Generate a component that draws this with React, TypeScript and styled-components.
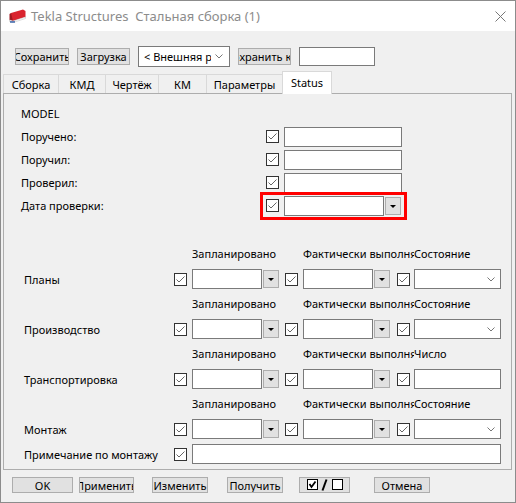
import React from 'react'
import styled, { createGlobalStyle } from 'styled-components'

const GlobalStyle = createGlobalStyle`
  * { box-sizing: border-box; }
  html, body { margin: 0; padding: 0; background: #fff; }
  body {
    font-family: "Noto Sans", "Liberation Sans", sans-serif;
    font-size: 11px;
    color: #000;
  }
`

const Window = styled.div`
  width: 516px;
  height: 503px;
  border: 1px solid #8c8c8c;
  background: #f0f0f0;
  display: flex;
  flex-direction: column;
  overflow: hidden;
`

const TitleBar = styled.div`
  height: 30px;
  flex: none;
  background: #fff;
  display: flex;
  align-items: center;
  gap: 5px;
  padding: 0 9px 0 8px;
  color: #8c8c8c;
  font-size: 13px;
`

const TitleText = styled.span`
  flex: 1;
  white-space: pre;
`

const Body = styled.div`
  flex: 1;
  display: flex;
  flex-direction: column;
  padding: 15px 3px 0 2px;
`

const Toolbar = styled.div`
  height: 21px;
  display: flex;
  align-items: center;
  gap: 8px;
  padding-left: 12px;
`

const Button = styled.div<{ $w: number; $h?: number; $ml?: number }>`
  width: ${p => p.$w}px;
  height: ${p => p.$h ?? 17}px;
  margin-left: ${p => p.$ml ?? 0}px;
  flex: none;
  background: #e1e1e1;
  border: 1px solid #adadad;
  display: flex;
  align-items: center;
  justify-content: center;
  overflow: hidden;
  white-space: nowrap;
  line-height: 1;
`

const SelectBox = styled.div`
  width: 92px;
  height: 21px;
  background: #fff;
  border: 1px solid #7a7a7a;
  display: flex;
  align-items: center;
  padding: 0 6px 0 5px;
  gap: 4px;
  & span {
    flex: 1;
    overflow: hidden;
    white-space: nowrap;
  }
`

const TextBox = styled.div<{ $w?: number; $h?: number }>`
  width: ${p => (p.$w ? `${p.$w}px` : '100%')};
  height: ${p => p.$h ?? 20}px;
  flex: none;
  background: #fff;
  border: 1px solid #7a7a7a;
`

const TabStrip = styled.div`
  height: 22px;
  margin-top: 4px;
  display: flex;
  align-items: flex-end;
`

const Tab = styled.div<{ $w: number; $active?: boolean }>`
  width: ${p => p.$w}px;
  height: ${p => (p.$active ? 23 : 19)}px;
  margin-bottom: ${p => (p.$active ? -1 : 0)}px;
  margin-left: -1px;
  position: relative;
  z-index: ${p => (p.$active ? 1 : 0)};
  background: ${p => (p.$active ? '#fff' : '#f0f0f0')};
  border: 1px solid #d9d9d9;
  border-bottom: none;
  display: flex;
  align-items: center;
  justify-content: center;
  padding-bottom: ${p => (p.$active ? 2 : 0)}px;
  white-space: nowrap;
  &:first-child { margin-left: 0; }
`

const Panel = styled.div`
  height: 377px;
  border: 1px solid #adadad;
  padding: 7px 0 0 17px;
  display: flex;
  flex-direction: column;
`

const UpperRow = styled.div<{ $h?: number }>`
  height: ${p => p.$h ?? 23}px;
  display: grid;
  grid-template-columns: 245px 18px auto;
  align-items: center;
`

const Label = styled.span`
  white-space: nowrap;
`

const Box = styled.span`
  width: 13px;
  height: 13px;
  background: #fff;
  border: 1px solid #333;
  display: flex;
  align-items: center;
  justify-content: center;
`

const Highlight = styled.div`
  grid-column: 2 / span 2;
  justify-self: start;
  display: flex;
  align-items: center;
  gap: 5px;
  position: relative;
  &::after {
    content: '';
    position: absolute;
    top: -4px;
    bottom: -4px;
    left: -6px;
    right: -6px;
    border: 3px solid #ff0000;
  }
`

const Picker = styled.div`
  display: flex;
  align-items: center;
  gap: 1px;
`

const DropButton = styled.div`
  width: 16px;
  height: 18px;
  background: #e1e1e1;
  border: 1px solid #adadad;
  display: flex;
  align-items: center;
  justify-content: center;
  &::before {
    content: '';
    border-left: 3px solid transparent;
    border-right: 3px solid transparent;
    border-top: 3px solid #000;
    margin-top: 1px;
  }
`

const Combo = styled.div`
  width: 87px;
  height: 20px;
  background: #fff;
  border: 1px solid #7a7a7a;
  display: flex;
  align-items: center;
  justify-content: flex-end;
  padding-right: 5px;
`

const Lower = styled.div`
  margin-top: 28px;
  padding-left: 3px;
  display: flex;
  flex-direction: column;
`

const Group = styled.div`
  display: flex;
  flex-direction: column;
  & + & { margin-top: 6px; }
`

const HeaderRow = styled.div`
  height: 16px;
  margin-bottom: 8px;
  padding-left: 168px;
  display: grid;
  grid-template-columns: 111px 111px 87px;
  align-items: center;
  & span {
    overflow: hidden;
    white-space: nowrap;
  }
`

const ControlRow = styled.div<{ $mt?: number }>`
  height: 20px;
  margin-top: ${p => p.$mt ?? 0}px;
  display: grid;
  grid-template-columns: 150px 18px 93px 18px 94px 17px 87px;
  align-items: center;
`

const Wide = styled.div`
  grid-column: 3 / span 5;
`

const Footer = styled.div`
  margin-top: 7px;
  padding-left: 9px;
  display: flex;
  align-items: center;
`

const Check = () => (
  <Box>
    <svg width="11" height="11" viewBox="0 0 11 11">
      <polyline points="1.5,5.5 4,8 9.5,2.5" fill="none" stroke="#666" strokeWidth="1" />
    </svg>
  </Box>
)

const Chevron = () => (
  <svg width="8" height="5" viewBox="0 0 8 5">
    <polyline points="0.5,0.5 4,4 7.5,0.5" fill="none" stroke="#777" strokeWidth="1" />
  </svg>
)

const DatePicker = ({ w }: { w: number }) => (
  <Picker>
    <TextBox $w={w} />
    <DropButton />
  </Picker>
)

const Logo = () => (
  <svg width="17" height="14" viewBox="0 0 17 14">
    <path d="M2 4 L14 0.5 L16.5 2 L16.5 8 L4 12 L2 11 Z" fill="#d9232e" />
    <path d="M0.5 5 L2 4 L4 12 L0.5 11 Z" fill="#a01820" />
    <path d="M0.5 11 L4 12 L16.5 8 L16.5 9.5 L4 13.5 L0.5 12.5 Z" fill="#fff" stroke="#bbb" strokeWidth="0.5" />
    <rect x="1" y="12.3" width="5" height="1.3" fill="#2050a0" />
  </svg>
)

const CloseIcon = () => (
  <svg width="11" height="11" viewBox="0 0 11 11">
    <path d="M0.5 0.5 L10.5 10.5 M10.5 0.5 L0.5 10.5" stroke="#777" strokeWidth="1" />
  </svg>
)

const ToggleIcon = () => (
  <svg width="36" height="12" viewBox="0 0 36 12">
    <rect x="0.5" y="0.5" width="10" height="10" fill="#fff" stroke="#000" />
    <polyline points="2.5,5 4.5,8 8.5,2.5" fill="none" stroke="#000" strokeWidth="1.8" />
    <path d="M15.5 11.5 L19.5 0.5" stroke="#000" strokeWidth="2" />
    <rect x="25.5" y="0.5" width="10" height="10" fill="#fff" stroke="#000" />
  </svg>
)

const tabs = [
  { t: 'Сборка', w: 56 },
  { t: 'КМД', w: 48 },
  { t: 'Чертёж', w: 54 },
  { t: 'КМ', w: 49 },
  { t: 'Параметры', w: 77 },
  { t: 'Status', w: 50, active: true },
]

const fields = ['Поручено:', 'Поручил:', 'Проверил:']

const groups = [
  { label: 'Планы', last: 'Состояние', combo: true },
  { label: 'Производство', last: 'Состояние', combo: true },
  { label: 'Транспортировка', last: 'Число', combo: false },
  { label: 'Монтаж', last: 'Состояние', combo: true },
]

const footerButtons = [
  { t: 'OK', w: 61, ml: 0 },
  { t: 'Применить', w: 55, ml: 6 },
  { t: 'Изменить', w: 56, ml: 18 },
  { t: 'Получить', w: 56, ml: 19 },
  { t: 'toggle', w: 51, ml: 16 },
  { t: 'Отмена', w: 56, ml: 24 },
]

export default function App() {
  return (
    <>
      <GlobalStyle />
      <Window>
        <TitleBar>
          <Logo />
          <TitleText>Tekla Structures  Стальная сборка (1)</TitleText>
          <CloseIcon />
        </TitleBar>
        <Body>
          <Toolbar>
            <Button $w={54}>Сохранить</Button>
            <Button $w={53}>Загрузка</Button>
            <SelectBox>
              <span>&lt; Внешняя рабочая</span>
              <Chevron />
            </SelectBox>
            <Button $w={53}>Сохранить как</Button>
            <TextBox $w={76} $h={19} />
          </Toolbar>
          <TabStrip>
            {tabs.map(tab => (
              <Tab key={tab.t} $w={tab.w} $active={tab.active}>
                {tab.t}
              </Tab>
            ))}
          </TabStrip>
          <Panel>
            <UpperRow $h={24}>
              <Label>MODEL</Label>
            </UpperRow>
            {fields.map(f => (
              <UpperRow key={f}>
                <Label>{f}</Label>
                <Check />
                <TextBox $w={118} />
              </UpperRow>
            ))}
            <UpperRow>
              <Label>Дата проверки:</Label>
              <Highlight>
                <Check />
                <DatePicker w={100} />
              </Highlight>
            </UpperRow>

            <Lower>
              {groups.map(g => (
                <Group key={g.label}>
                  <HeaderRow>
                    <span>Запланировано</span>
                    <span>Фактически выполня</span>
                    <span>{g.last}</span>
                  </HeaderRow>
                  <ControlRow>
                    <Label>{g.label}</Label>
                    <Check />
                    <DatePicker w={70} />
                    <Check />
                    <DatePicker w={70} />
                    <Check />
                    {g.combo ? (
                      <Combo>
                        <Chevron />
                      </Combo>
                    ) : (
                      <TextBox $w={87} />
                    )}
                  </ControlRow>
                </Group>
              ))}
              <ControlRow $mt={5}>
                <Label>Примечание по монтажу</Label>
                <Check />
                <Wide>
                  <TextBox />
                </Wide>
              </ControlRow>
            </Lower>
          </Panel>
          <Footer>
            {footerButtons.map(b => (
              <Button key={b.t} $w={b.w} $h={16} $ml={b.ml}>
                {b.t === 'toggle' ? <ToggleIcon /> : b.t}
              </Button>
            ))}
          </Footer>
        </Body>
      </Window>
    </>
  )
}
